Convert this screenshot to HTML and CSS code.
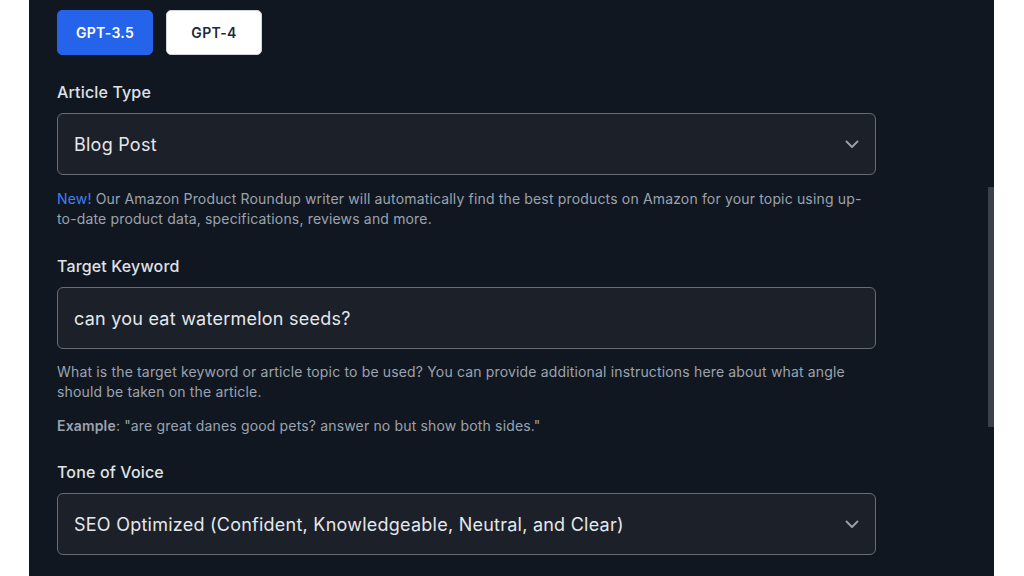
FILE: index.html
```html
<!DOCTYPE html>
<html>
<head>
<meta charset="utf-8">
<link rel="stylesheet" href="styles.css">
</head>
<body>
<div class="panel">
  <div class="content">
    <div class="models">
      <button class="model active">GPT-3.5</button>
      <button class="model">GPT-4</button>
    </div>

    <label class="label first">Article Type</label>
    <div class="field">
      <span>Blog Post</span>
      <svg class="chev" width="18" height="18" viewBox="0 0 18 18"><path d="M3.5 6.5 L9 12 L14.5 6.5" fill="none" stroke="#9ca3af" stroke-width="1.8" stroke-linecap="round" stroke-linejoin="round"/></svg>
    </div>
    <p class="help first-help"><span class="new">New!</span> Our Amazon Product Roundup writer will automatically find the best products on Amazon for your topic using up-to-date product data, specifications, reviews and more.</p>

    <label class="label">Target Keyword</label>
    <div class="field">
      <span>can you eat watermelon seeds?</span>
    </div>
    <p class="help kw-help">What is the target keyword or article topic to be used? You can provide additional instructions here about what angle should be taken on the article.</p>
    <p class="help example"><strong>Example</strong>: "are great danes good pets? answer no but show both sides."</p>

    <label class="label tone">Tone of Voice</label>
    <div class="field">
      <span>SEO Optimized (Confident, Knowledgeable, Neutral, and Clear)</span>
      <svg class="chev" width="18" height="18" viewBox="0 0 18 18"><path d="M3.5 6.5 L9 12 L14.5 6.5" fill="none" stroke="#9ca3af" stroke-width="1.8" stroke-linecap="round" stroke-linejoin="round"/></svg>
    </div>
  </div>
  <div class="scrollbar"><div class="thumb"></div></div>
</div>
</body>
</html>
```

FILE: styles.css
```css
html, body {
  margin: 0;
  padding: 0;
  background: #ffffff;
  height: 576px;
  overflow: hidden;
}
body {
  font-family: Inter, "Liberation Sans", sans-serif;
}
.panel {
  margin-left: 29px;
  width: 965px;
  height: 576px;
  background: #111720;
  display: flex;
  justify-content: space-between;
}
.content {
  padding: 10px 0 0 28px;
  width: 819px;
}
.models {
  display: flex;
  gap: 13px;
}
.model {
  width: 96px;
  height: 45px;
  border-radius: 5px;
  border: 1px solid #d1d5db;
  background: #ffffff;
  color: #1f2937;
  font-family: Inter, "Liberation Sans", sans-serif;
  font-size: 14px;
  font-weight: 600;
  letter-spacing: 0.3px;
  padding: 0;
}
.model.active {
  background: #2563eb;
  border-color: #2563eb;
  color: #ffffff;
}
.label {
  display: block;
  margin-top: 25px;
  font-size: 16px;
  line-height: 24px;
  font-weight: 500;
  letter-spacing: 0.15px;
  color: #dfe2e6;
}
.label.tone { margin-top: 24px; }
.field {
  margin-top: 9px;
  height: 60px;
  border: 1px solid #676c75;
  border-radius: 6px;
  background: #1c2029;
  display: flex;
  align-items: center;
  justify-content: space-between;
  padding: 0 14px 0 16px;
  color: #e5e7eb;
  font-size: 18px;
  letter-spacing: 0.24px;
}
.chev {
  display: block;
}
.help {
  margin: 0;
  font-size: 14px;
  line-height: 20px;
  color: #9ca3af;
  letter-spacing: 0.16px;
}
.first-help { margin-top: 14px; }
.kw-help { margin-top: 13px; }
.example { margin-top: 14px; }
.example strong { font-weight: 600; color: #9ca3af; }
.new { color: #3b82f6; }
.scrollbar {
  width: 6px;
  padding-top: 187px;
}
.thumb {
  height: 240px;
  background: #3a414d;
  border-radius: 1px;
}
```
